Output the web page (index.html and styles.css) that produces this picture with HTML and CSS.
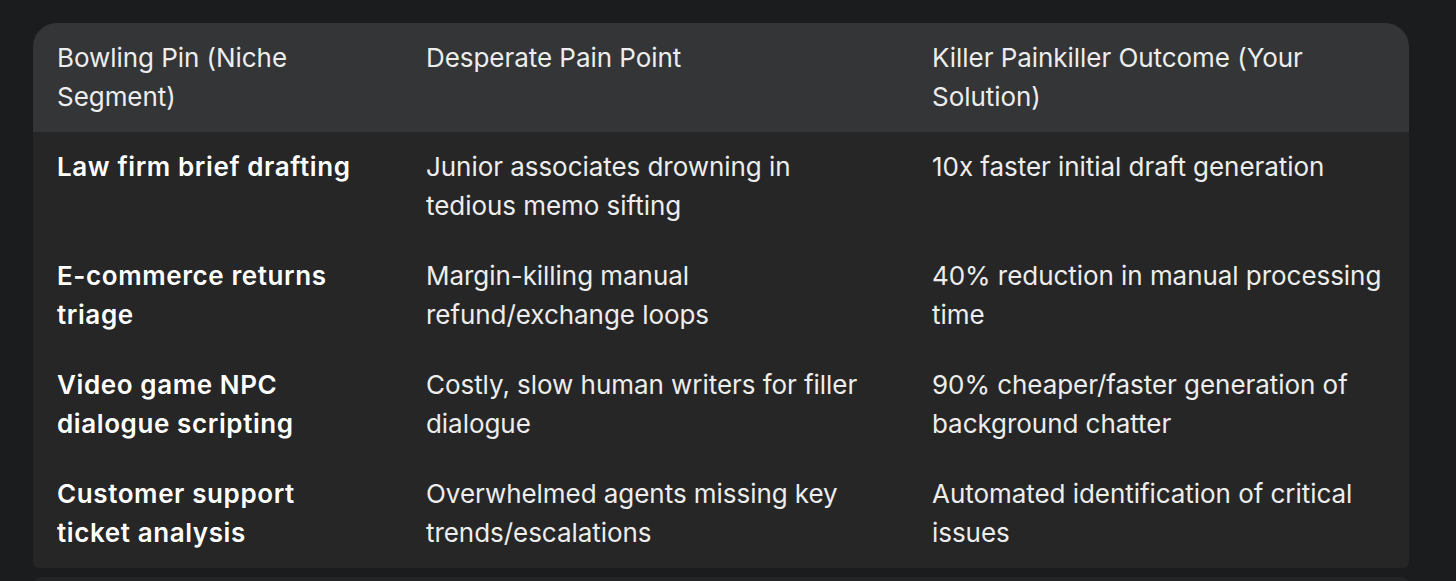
FILE: index.html
```html
<!DOCTYPE html>
<html lang="en">
<head>
<meta charset="utf-8">
<title>Bowling Pin Strategy</title>
<link rel="stylesheet" href="styles.css">
</head>
<body>
<div class="page">
  <div class="card">
    <div class="row head">
      <div class="cell c1">Bowling Pin (Niche<br>Segment)</div>
      <div class="cell c2">Desperate Pain Point</div>
      <div class="cell c3">Killer Painkiller Outcome (Your<br>Solution)</div>
    </div>
    <div class="row">
      <div class="cell c1 strong">Law firm brief drafting</div>
      <div class="cell c2">Junior associates drowning in<br>tedious memo sifting</div>
      <div class="cell c3">10x faster initial draft generation</div>
    </div>
    <div class="row">
      <div class="cell c1 strong">E-commerce returns<br>triage</div>
      <div class="cell c2">Margin-killing manual<br>refund/exchange loops</div>
      <div class="cell c3">40% reduction in manual processing<br>time</div>
    </div>
    <div class="row">
      <div class="cell c1 strong">Video game NPC<br>dialogue scripting</div>
      <div class="cell c2">Costly, slow human writers for filler<br>dialogue</div>
      <div class="cell c3">90% cheaper/faster generation of<br>background chatter</div>
    </div>
    <div class="row">
      <div class="cell c1 strong">Customer support<br>ticket analysis</div>
      <div class="cell c2">Overwhelmed agents missing key<br>trends/escalations</div>
      <div class="cell c3">Automated identification of critical<br>issues</div>
    </div>
  </div>
  <div class="next"></div>
</div>
</body>
</html>
```
FILE: styles.css
```css
html, body {
  margin: 0;
  padding: 0;
  background: #1b1c1d;
  height: 100%;
  overflow: hidden;
}
.page {
  padding: 23px 47px 0 33px;
  display: flex;
  flex-direction: column;
  gap: 9px;
}
.card {
  background: #262626;
  border-radius: 24px 24px 6px 6px;
  overflow: hidden;
  font-family: Inter, "Liberation Sans", sans-serif;
  font-size: 26px;
  line-height: 39px;
  color: #ededed;
}
.row {
  display: grid;
  grid-template-columns: 369px 506px 1fr;
  padding: 15px 0 16px;
  min-height: 78px;
}
.row.head {
  background: #333537;
}
.cell {
  padding: 0 4px 0 24px;
  letter-spacing: -0.05px;
}
.strong {
  font-weight: 600;
  color: #ffffff;
  letter-spacing: 0.6px;
}
.next {
  height: 20px;
  background: #232425;
  border-radius: 8px 8px 0 0;
}
```
